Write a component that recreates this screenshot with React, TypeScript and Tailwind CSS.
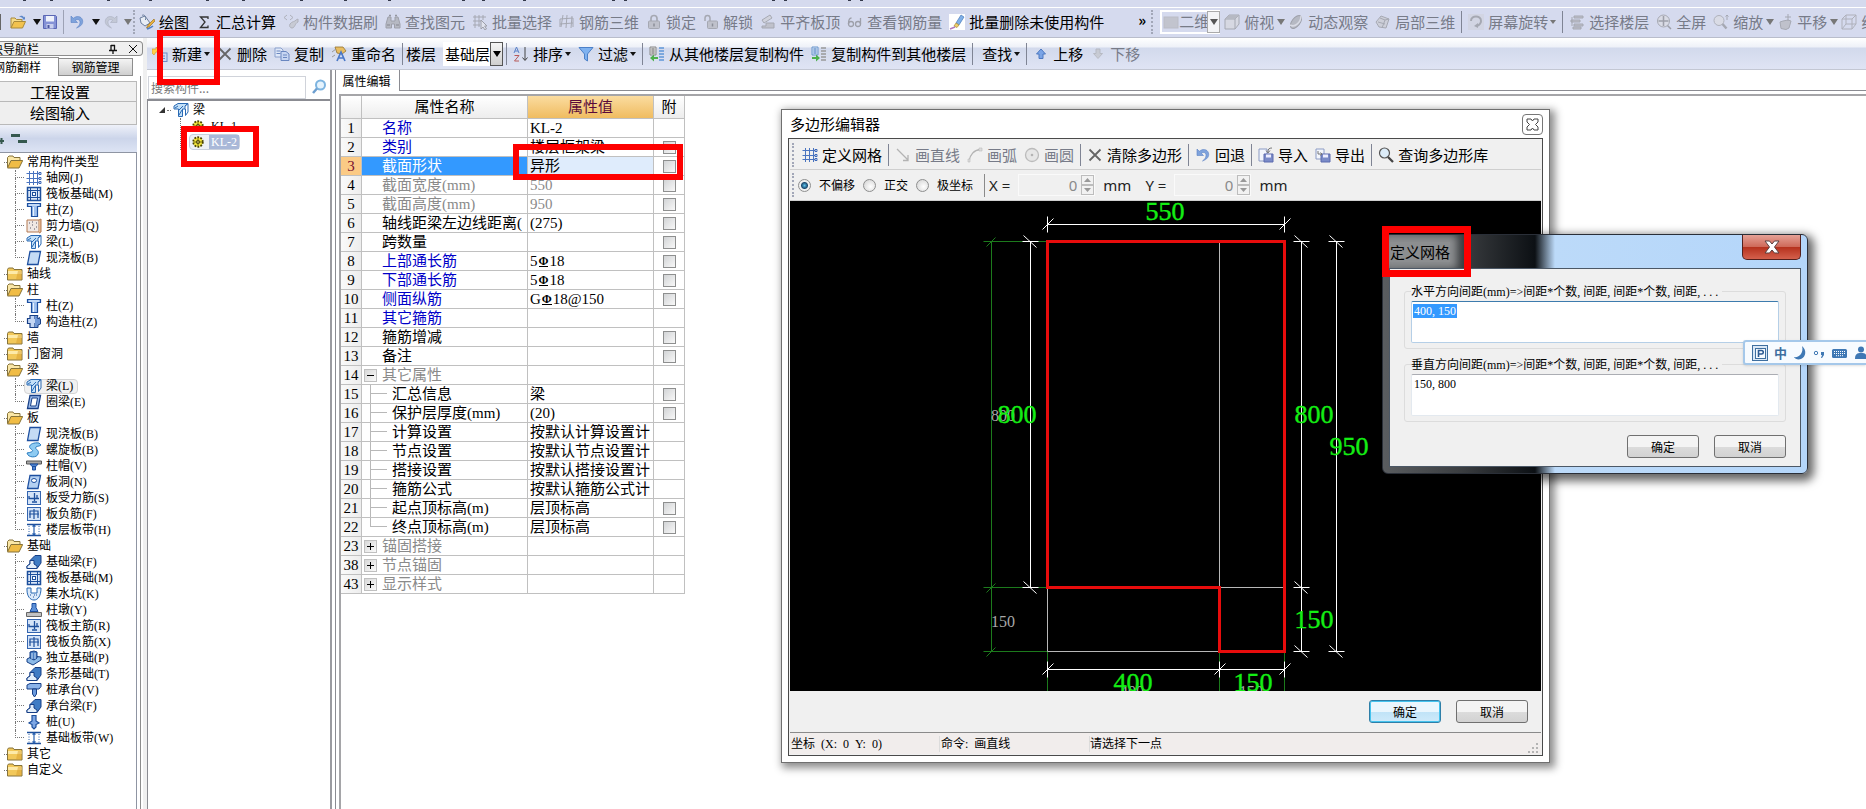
import React from "react";

type Kids = { children?: React.ReactNode };

function Svg({ children, dim }: Kids & { dim?: boolean }) {
  return (
    <svg viewBox="0 0 16 16" aria-hidden="true" className={dim ? "size-4 shrink-0 opacity-50 grayscale" : "size-4 shrink-0"}>
      {children}
    </svg>
  );
}

const art: Record<string, React.ReactNode> = {
  open: (
    <>
      <path d="M1 14V4h4l1.500 1.500H12V8" fill="#f6dc8a" stroke="#a98a3a" />
      <path d="M1 14l3-6.500h11.500L12.500 14z" fill="#f2c24e" stroke="#a98a3a" />
      <path d="M9 2.500c2-1.500 4-1 5 1l1-1v3h-3l1-1c-1-1.300-2.500-1.500-4-2z" fill="#5c86c8" />
    </>
  ),
  save: (
    <>
      <path d="M1.500 1.500h12l1 1v12h-13z" fill="#8592d6" stroke="#5a66b4" />
      <rect x="4" y="2" width="8" height="5.500" fill="#eef1fb" />
      <rect x="4.500" y="10" width="7" height="4.500" fill="#c9cfee" />
      <rect x="5.500" y="11" width="2" height="3" fill="#4a559f" />
    </>
  ),
  undo: (
    <path d="M2 2v6.500h6.500L6.300 6.300C9 4.500 11.500 6 11 9c-.3 2-1.800 3.800-3.500 5C12 12.500 14.500 9.500 13.500 6 12.300 2 7.500 1.500 4.300 4.300z" fill="#7fa3dc" stroke="#5b82c4" strokeWidth=".6" />
  ),
  redo: (
    <path d="M14 2v6.500H7.500l2.200-2.200C7 4.500 4.500 6 5 9c.3 2 1.800 3.800 3.500 5C4 12.500 1.500 9.500 2.500 6 3.700 2 8.500 1.500 11.700 4.300z" fill="#c3c8d6" stroke="#a9afc0" strokeWidth=".6" />
  ),
  draw: (
    <>
      <path d="M1 4l5-2 5 7-5 3-4-3z" fill="#e8edf5" stroke="#6c7f9e" />
      <path d="M3 1.500C5 0 7 2 6.500 6" fill="none" stroke="#6c7f9e" />
      <path d="M15 5l-6 6-1.500 3 3-1.500L16 7z" fill="#e9b13c" stroke="#9b7426" strokeWidth=".7" />
      <path d="M8 15c2-1 4-1 6-3" fill="none" stroke="#4f7fc4" strokeWidth="1.500" />
    </>
  ),
  sigma: <path d="M12 5V3H4.500L9 8l-4.500 5.500H12v-2" fill="none" stroke="#333" strokeWidth="1.300" />,
  brush: (
    <>
      <path d="M4 1L1 3.500 4 6M7 1l3 2.500L7 6" fill="none" stroke="#888" />
      <path d="M7 10c2-3 5-2 6-4l2-1v3c-3 1-3 6-6 6-2 0-3-2-2-4z" fill="#bbb" stroke="#888" />
    </>
  ),
  binocular: (
    <>
      <path d="M3 3h3v4h4V3h3l2 7v4H9.500v-4h-3v4H1v-4z" fill="#999" stroke="#666" />
      <path d="M4 1.500h2M10 1.500h2M2 11h3M11 11h3" stroke="#555" strokeWidth="1.300" />
    </>
  ),
  batch: (
    <>
      <path d="M1 3h13M1 7h8M1 11h7M3 1v13M7 1v12M11 1v5" stroke="#777" fill="none" />
      <path d="M9 6v9l2-2 2 3 1.500-1-1.800-3H15z" fill="#eee" stroke="#666" />
    </>
  ),
  rebar: <path d="M4 1L2 13M8 1L7 14M13 2l-1 12M1 5l13-1M1 10l13-1M1 5v8M14 4v9" stroke="#777" fill="none" />,
  lock: (
    <>
      <path d="M5 7V4.500c0-4 6-4 6 0V7" fill="none" stroke="#777" strokeWidth="1.700" />
      <rect x="2.500" y="7" width="11" height="7.500" rx="1" fill="#aaa" stroke="#777" />
      <path d="M8 9.500v3" stroke="#444" strokeWidth="1.500" />
    </>
  ),
  unlock: (
    <>
      <path d="M2 7V4c0-3.500 5-3.500 5 0v3" fill="none" stroke="#777" strokeWidth="1.500" />
      <rect x="4.500" y="7" width="10" height="7.500" rx="1" fill="#aaa" stroke="#777" />
      <path d="M9.500 9.500v3" stroke="#444" strokeWidth="1.500" />
    </>
  ),
  align: (
    <>
      <path d="M2 6l8-5 2 3-8 5z" fill="#ccc" stroke="#777" />
      <path d="M6 9h8v5H2v-2h4z" fill="#aaa" stroke="#777" />
    </>
  ),
  glasses: (
    <>
      <circle cx="4" cy="10" r="2.500" fill="none" stroke="#666" strokeWidth="1.300" />
      <circle cx="11" cy="10" r="2.500" fill="none" stroke="#666" strokeWidth="1.300" />
      <path d="M1.500 10c0-4 1-6 3-6M13.500 10V4" fill="none" stroke="#666" strokeWidth="1.300" />
    </>
  ),
  eraser: (
    <>
      <rect width="16" height="16" fill="#fff" />
      <path d="M12 1l3 2-5 8-3-2z" fill="#7fb0e8" stroke="#4a7ab8" strokeWidth=".7" />
      <path d="M7 9l3 2-2 2.500L5 12z" fill="#f0cf6a" stroke="#a88a3a" strokeWidth=".7" />
      <path d="M1 15l5-2" stroke="#b07ac0" strokeWidth="1.500" />
    </>
  ),
  flat: <rect x="1" y="3" width="14" height="11" fill="#aab0c6" stroke="#9aa0b6" />,
  cube: (
    <>
      <path d="M1 5l4-4h10v9l-4 5H1z" fill="#d5d8e0" stroke="#777" />
      <path d="M1 5h10v10M11 5l4-4" fill="none" stroke="#777" />
      <path d="M1 5l4-4h10l-4 4z" fill="#999" />
    </>
  ),
  orbit: (
    <>
      <ellipse cx="8" cy="8" rx="4" ry="7.500" transform="rotate(38 8 8)" fill="#999" stroke="#666" />
      <path d="M2 11C7 14 13 8 13 2" fill="none" stroke="#ddd" strokeWidth="1.500" />
    </>
  ),
  local: (
    <>
      <path d="M1 8l5-6 8 3-3 9-7-1z" fill="#c4c6cc" stroke="#777" />
      <path d="M5 4l5 2-3 8M10 6l4-1M3 8l7 2" fill="none" stroke="#777" />
    </>
  ),
  rotate: (
    <>
      <rect width="16" height="16" fill="#ccc" opacity=".6" />
      <path d="M3 7c0-6 10-6 10 0 0 3-2 4-4 5" fill="none" stroke="#777" strokeWidth="2" />
      <path d="M10 9v5l-4-2z" fill="#777" />
    </>
  ),
  floors: <path d="M5 2h9v2H5zM2 6h9v2H2zM5 10h9v2H5zM4 13h8v2H4zM3 3v9" fill="#aaa" stroke="#777" />,
  full: (
    <>
      <circle cx="7.500" cy="7" r="6" fill="#ddd" stroke="#777" />
      <path d="M7.500 2v10M2.500 7h10M11.500 11.500L15 15" stroke="#666" strokeWidth="1.500" />
    </>
  ),
  zoomy: (
    <>
      <circle cx="6" cy="6.500" r="5" fill="#ddd" stroke="#888" />
      <path d="M9.500 10l4 4.500" stroke="#777" strokeWidth="2.500" />
      <path d="M14 1v5M12.500 2.500L14 1l1.500 1.500" stroke="#777" fill="none" />
    </>
  ),
  hand: (
    <>
      <path d="M3 8l3-1 5-1 3 1-2 7-3 1.500-5-1z" fill="#aaa" stroke="#777" />
      <path d="M11 0v7M8 3h6" stroke="#777" />
    </>
  ),
  wire: (
    <path d="M1 5l4-4h10v9l-4 5H1zM1 5h10v10M11 5l4-4M5 1v9h10M5 10l-4 5" fill="none" stroke="#888" />
  ),
  add: (
    <>
      <path d="M0 3h4V1l2 2h3v3H4l-2 3-2-2z" fill="#ffd24a" stroke="#c9962a" strokeWidth=".6" />
      <rect x="6" y="7" width="9" height="8.500" fill="#cfdcf5" stroke="#6f8ac4" />
      <path d="M8 10h5M8 12.500h5" stroke="#6f8ac4" />
    </>
  ),
  cross: <path d="M2.500 2.500L13.500 13.500M13.500 2.500L2.500 13.500" stroke="#666" strokeWidth="1.800" fill="none" />,
  copy: (
    <>
      <path d="M1 2h6l2 2v7H1z" fill="#dfe8f8" stroke="#8aa0cc" />
      <path d="M7 5.500h5l3 2.500v6.500H7z" fill="#c7d6f2" stroke="#6a87c0" />
      <path d="M2.500 5h4M2.500 7.500h4M9 9h4M9 11.500h4" stroke="#6a87c0" />
    </>
  ),
  rename: (
    <>
      <path d="M4 1h8l3 4-4 3-5-1z" fill="#e8bd62" stroke="#96742e" strokeWidth=".8" />
      <path d="M1 6l4-3M1 11l3-2" stroke="#999" />
      <path d="M6 15l4-9 4 9M7.500 12h5" fill="none" stroke="#4a78c8" strokeWidth="1.700" />
    </>
  ),
  sort: (
    <>
      <path d="M1 7l2.500-6L6 7M2 5h3" fill="none" stroke="#5b82c8" />
      <path d="M1.500 9.500H6L1.500 15H6" fill="none" stroke="#b85a5a" />
      <path d="M12 1v13M9.500 11.500L12 14.500l2.500-3" fill="none" stroke="#444" />
    </>
  ),
  filter: <path d="M1 1.500h14L9.500 8v7L6.500 13V8z" fill="#7fb2f0" stroke="#4b80c8" />,
  fromFloor: (
    <>
      <path d="M1 1h6v8H1z" fill="#ddd" stroke="#888" />
      <path d="M2.500 3h3M2.500 5h3M2.500 7h3" stroke="#666" />
      <path d="M10 2h5M10 5h5M10 8h5M10 11h5M10 14h5" stroke="#5f96d8" strokeWidth="1.600" />
      <path d="M9 11H5V8.500L1 12l4 3.500V13h4z" fill="#4db04d" />
    </>
  ),
  toFloor: (
    <>
      <path d="M1 1h6v8H1z" fill="#cfe0f5" stroke="#6a96cc" />
      <path d="M2.500 3h3M2.500 5h3M2.500 7h3" stroke="#4477bb" />
      <path d="M10 2h5M10 5h5M10 8h5M10 11h5M10 14h5" stroke="#999" strokeWidth="1.600" />
      <path d="M1 11h4V8.500L9 12l-4 3.500V13H1z" fill="#4db04d" />
    </>
  ),
  up: <path d="M8 3l4.500 5H10v4.500H6V8H3.500z" fill="#7aa4e6" stroke="#4d78c0" />,
  down: <path d="M8 12.500L3.500 7.500H6V3h4v4.500h2.500z" fill="#bbb" stroke="#999" />,
  line: <path d="M2 2l11 11M13 8v5.500H8" fill="none" stroke="#777" strokeWidth="1.300" />,
  arc: (
    <>
      <path d="M2 14C3 8 7 3 13 2.500" fill="none" stroke="#777" strokeWidth="1.300" />
      <path d="M12 1h3v3h-3zM1 12h2v3H1z" fill="#ccc" stroke="#888" strokeWidth=".6" />
    </>
  ),
  circle: (
    <>
      <circle cx="8" cy="8" r="6.500" fill="#ddd" stroke="#888" strokeWidth="1.300" />
      <circle cx="8" cy="8" r="1.300" fill="#777" />
    </>
  ),
  importing: (
    <>
      <path d="M1 2h8v12H1z" fill="#f3f6fc" stroke="#8c9bc4" />
      <path d="M6 7h9v8H6z" fill="#7b8bc8" stroke="#5c6bae" />
      <path d="M8 7.500h5v3H8z" fill="#eef" />
      <path d="M14 1c-3 0-4 1-4 4M8 3.500L10 6l2-2.500" fill="none" stroke="#777" />
    </>
  ),
  exporting: (
    <>
      <path d="M1 2h8v10H1z" fill="#f3f6fc" stroke="#8c9bc4" />
      <path d="M6 7h9v8H6z" fill="#7b8bc8" stroke="#5c6bae" />
      <path d="M8 7.500h5v3H8z" fill="#eef" />
      <path d="M3 4v3h4M5.500 5.500L7 7 5.500 8.500" fill="none" stroke="#777" />
    </>
  ),
  search: (
    <>
      <circle cx="6.500" cy="6" r="5" fill="#dcecf8" stroke="#555" strokeWidth="1.200" />
      <path d="M10 10l5 5" stroke="#444" strokeWidth="2.300" />
    </>
  ),
  find: (
    <>
      <circle cx="9.500" cy="6" r="4.500" fill="#e5f3fd" stroke="#7db4e0" strokeWidth="2" />
      <path d="M6 9.500L2 14" stroke="#6d9fd0" strokeWidth="2.500" />
    </>
  ),
  grid: (
    <>
      <path d="M.5 3.500h13M.5 8.500h13M.5 12.500h13M3.500 1v14M7.500 1v14M11.500 1v14" stroke="#4a74c0" fill="none" />
      <path d="M13 2.500h2v2h-2zM13 7.500h2v2h-2zM13 11.500h2v2h-2z" stroke="#3b67b8" fill="#fff" />
    </>
  ),
  folder: (
    <>
      <path d="M.5 3.500l1-1.500H6l1 1.500h8V14H.5z" fill="#f2c85a" stroke="#86733a" />
      <path d="M1 5h13.500v3H1z" fill="#fdeaa9" />
      <path d="M11 5h3.500v8.500H9z" fill="#d79d2c" opacity=".5" />
    </>
  ),
  folderOpen: (
    <>
      <path d="M.5 13V3.500L2 2h4l1 1.500h6V6" fill="#fbe7a6" stroke="#86733a" />
      <path d="M.5 14L4 6.500h11.700L12 14z" fill="#f0bc45" stroke="#86733a" />
    </>
  ),
  raft: (
    <>
      <rect x="1.500" y="1.500" width="13" height="13" fill="#dce8f8" stroke="#1d4f9c" strokeWidth="1.500" />
      <path d="M1 4.500h14M1 11.500h14M4.500 1v14M11.500 1v14" stroke="#1d4f9c" />
      <rect x="6.500" y="6.500" width="3" height="3" fill="#fff" stroke="#1d4f9c" />
    </>
  ),
  column: (
    <>
      <path d="M1.500 1.500h13v3h-3v10h-6v-10h-4z" fill="#9fc0ee" stroke="#1d4fa0" strokeWidth="1.200" />
      <path d="M3 3h10M7.500 5v9" stroke="#e8f2fd" />
    </>
  ),
  wall: (
    <>
      <path d="M1 2h12v12H1z" fill="#f0e8e4" stroke="#b57a52" />
      <path d="M13 2l2-1v13l-2 1" fill="#e6b890" stroke="#b57a52" />
      <path d="M3 5h1M6 7h1M10 5h1M4 10h1M8 11h1M10 9h1M6 4h1" stroke="#556" />
    </>
  ),
  beam: (
    <>
      <path d="M1 4l4-2.500h10L12 4v3H9.500v7.500h-4V7H1z" fill="#c3e0f8" stroke="#2a6ab4" />
      <path d="M12 4l3-2.500V10l-2.500 3.500V7M2 6l3-2M6 13l3-5M6 8l4-4" fill="none" stroke="#2a6ab4" />
    </>
  ),
  slab: <path d="M4 1.500h10.500L12 14.500H1.500z" fill="#c4dbf5" stroke="#1d4fa0" strokeWidth="1.300" />,
  ring: (
    <>
      <path d="M4 1.500h10.500L12 14.500H1.500z" fill="#9cbcec" stroke="#173f86" strokeWidth="1.300" />
      <path d="M6 4h5.500L10 12H4.500z" fill="#fff" stroke="#173f86" />
    </>
  ),
  hole: (
    <>
      <path d="M4 1.500h10.500L12 14.500H1.500z" fill="#b4d0f2" stroke="#1d4fa0" strokeWidth="1.300" />
      <ellipse cx="8" cy="6.500" rx="2.500" ry="2" fill="#fff" stroke="#1d4fa0" />
    </>
  ),
  tie: (
    <>
      <path d="M4 1.500h5v3h3v5H9v4H4v-4H1.500v-5H4z" fill="#c3d6f4" stroke="#173f86" strokeWidth="1.200" />
      <path d="M9 1.500h3l-1 2.500 3.500 1v5L12 11v2.500H9M12 4.500l2-1" fill="#6f97d6" stroke="#173f86" />
    </>
  ),
  spiral: (
    <path d="M13 1C6 0 1 4 5 7c3 2 2 3-4 4 1 5 10 5 11 1C14 8 8 7 10 5c1-1 5-1 5-2z" fill="#8ecbf2" stroke="#2a7cc0" />
  ),
  cap: (
    <>
      <path d="M.5 3h15v3H.5z" fill="#a8a8a8" stroke="#555" />
      <path d="M4 6h8l-2 2.500H6zM6.500 8.500h3V12h-3z" fill="#4f84d0" stroke="#1d4fa0" />
    </>
  ),
  bars: (
    <>
      <rect x="1.500" y="1.500" width="13" height="13" fill="#d5e4f8" stroke="#3465b0" />
      <path d="M8.500 3v8M3 6v2.500h10M11 5v3M6 12h5" fill="none" stroke="#1d4f9c" strokeWidth="1.300" />
    </>
  ),
  negbars: (
    <>
      <rect x="1.500" y="1.500" width="13" height="13" fill="#d5e4f8" stroke="#3465b0" />
      <path d="M4 12V5h8v7M3 8h10M8 3v10" fill="none" stroke="#1d4f9c" strokeWidth="1.200" />
    </>
  ),
  strip: (
    <>
      <path d="M1 2.500h14M1 13.500h14" stroke="#1d4f9c" strokeWidth="1.500" />
      <path d="M8 3v10M6.500 4.500L8 3l1.500 1.500M6.500 11.500L8 13l1.500-1.500" stroke="#2a62b0" fill="none" strokeWidth="1.200" />
      <path d="M3 4v9M13 4v9" stroke="#2a62b0" strokeDasharray="1 1.500" />
    </>
  ),
  footing: (
    <>
      <path d="M1 14.500V12l3-2V6.500L9 1.500h6V9l-4 5.500z" fill="#3f7cc4" stroke="#173f86" />
      <path d="M1 14.500V12l3-2V6.500h4V10l3 2v2.500z" fill="#e3effb" stroke="#173f86" />
    </>
  ),
  pit: (
    <>
      <path d="M1 2h4v5h6V2h4c0 8-3 12-7 12S1 10 1 4z" fill="#dceafa" stroke="#2a6ab4" />
      <path d="M4 9h1M7 11h1M10 9h1M8 9h1" stroke="#1d4f9c" />
    </>
  ),
  pier: (
    <>
      <path d="M6 1.500h4v4l2 4H4l2-4z" fill="#5c90d8" stroke="#1d4fa0" />
      <path d="M.5 10.500h15v4H.5z" fill="#c2c2c2" stroke="#666" />
    </>
  ),
  iso: (
    <>
      <path d="M1 9l6-3 8 1v3l-8 5-6-3z" fill="#8cbae8" stroke="#173f86" />
      <path d="M4 2l4-1 3 1v6l-3 2-4-2z" fill="#4a80c4" stroke="#173f86" />
      <path d="M6 3v6M9 3v6" stroke="#cfe2f8" />
    </>
  ),
  pilecap: (
    <>
      <path d="M1 3l3-1.500h11v3L13 7H1z" fill="#8cb4ea" stroke="#173f86" />
      <path d="M6.500 7h4v5l-2 3-2-3z" fill="#6a9ade" stroke="#173f86" />
    </>
  ),
  pile: <path d="M6 1.500h4V7l3 2-3 1.500V13l-2 2-2-2v-2.500L3 9l3-2z" fill="#7da6e4" stroke="#1d4f9c" strokeWidth="1.200" />,
  gear: (
    <>
      <circle cx="8" cy="8" r="5.500" fill="#f4e83a" stroke="#4a4400" strokeWidth="2" strokeDasharray="2 1.500" />
      <circle cx="8" cy="8" r="2" fill="#fff8a0" stroke="#4a4400" />
      <path d="M8 3v10M3 8h10" stroke="#4a4400" strokeWidth=".8" />
    </>
  ),
};

function Icon({ name, dim }: { name: string; dim?: boolean }) {
  return <Svg dim={dim}>{art[name]}</Svg>;
}

function Caret({ dim, small }: { dim?: boolean; small?: boolean }) {
  const fill = dim ? "#777" : "#111";
  return small ? (
    <svg viewBox="0 0 6 4" aria-hidden="true" className="ml-0.5 h-1 w-1.5 shrink-0">
      <path d="M0 0h6L3 4z" fill={fill} />
    </svg>
  ) : (
    <svg viewBox="0 0 8 6" aria-hidden="true" className="-mr-1 ml-[3px] h-1.5 w-2 shrink-0">
      <path d="M0 0h8L4 6z" fill={fill} />
    </svg>
  );
}

type ToolProps = { icon?: string; label: string; dim?: boolean; caret?: "big" | "small" };

function Tool({ icon, label, dim, caret }: ToolProps) {
  return (
    <button
      type="button"
      disabled={dim}
      className={
        "flex shrink-0 items-center px-[3px] text-[15px] leading-5 whitespace-nowrap " + (dim ? "text-[#777b88]" : "text-black")
      }
    >
      {icon && <Icon name={icon} dim={dim} />}
      <span className={icon ? "ml-1" : ""}>{label}</span>
      {caret && <Caret dim={dim} small={caret === "small"} />}
    </button>
  );
}

const Sep = () => <span className="mx-0.5 h-[22px] w-px shrink-0 bg-[#7f8494]" />;
const Grip = () => <span className="h-6 w-0 shrink-0 border-l-2 border-dotted border-[#a2a7b8]" />;

function MainToolbar() {
  return (
    <header className="shrink-0 bg-[#d5daee]">
      <svg className="block h-[7px] w-full" aria-hidden="true">
        {[23, 50, 107, 149, 206, 242, 300, 344, 388, 462, 482, 523, 612, 624, 772, 784, 848, 860].map((x) => (
          <rect key={x} x={x} y="0" width="3" height="1" fill="#33384a" />
        ))}
      </svg>
      <div className="flex h-[31px] items-center gap-px overflow-hidden border-t border-b border-t-white border-b-[#b9bdcb] bg-[#d5daee] pb-0.5">
        <span className="h-4 w-px shrink-0 bg-[#666]" />
        <button type="button" aria-label="打开" className="ml-2 flex shrink-0 items-center">
          <Icon name="open" />
          <span className="ml-1">
            <Caret />
          </span>
        </button>
        <button type="button" aria-label="保存" className="ml-1 shrink-0">
          <Icon name="save" />
        </button>
        <span className="mx-1 h-6 w-px shrink-0 bg-[#9da2b5]" />
        <button type="button" aria-label="撤销" className="flex shrink-0 items-center">
          <Icon name="undo" />
          <span className="ml-1">
            <Caret />
          </span>
        </button>
        <button type="button" aria-label="恢复" className="ml-1.5 flex shrink-0 items-center">
          <Icon name="redo" />
          <span className="ml-0.5">
            <Caret dim />
          </span>
        </button>
        <span className="w-[3px] shrink-0" />
        <Grip />
        <Tool icon="draw" label="绘图" />
        <Tool icon="sigma" label="汇总计算" />
        <Tool icon="brush" label="构件数据刷" dim />
        <Tool icon="binocular" label="查找图元" dim />
        <Tool icon="batch" label="批量选择" dim />
        <Tool icon="rebar" label="钢筋三维" dim />
        <Tool icon="lock" label="锁定" dim />
        <Tool icon="unlock" label="解锁" dim />
        <Tool icon="align" label="平齐板顶" dim />
        <Tool icon="glasses" label="查看钢筋量" dim />
        <Tool icon="eraser" label="批量删除未使用构件" />
        <button type="button" aria-label="更多" className="ml-[26px] w-4 shrink-0 self-start text-[15px] leading-6 font-bold">
          »
        </button>
        <Grip />
        <label className="ml-1.5 flex h-6 shrink-0 items-center border-2 border-r-0 border-white pl-px text-[15px] text-[#777b88]">
          <Icon name="flat" dim />
          <select aria-label="视图" disabled className="w-7 shrink-0 appearance-none overflow-hidden bg-transparent opacity-100">
            <option>二维</option>
          </select>
          <span className="flex h-[22px] w-[13px] shrink-0 items-center justify-center border border-[#aaa] bg-[#f3f4f6]">
            <svg viewBox="0 0 8 6" className="h-1.5 w-2">
              <path d="M0 0h8L4 6z" fill="#555" />
            </svg>
          </span>
        </label>
        <Tool icon="cube" label="俯视" dim caret="big" />
        <Tool icon="orbit" label="动态观察" dim />
        <Tool icon="local" label="局部三维" dim />
        <Sep />
        <Tool icon="rotate" label="屏幕旋转" dim caret="small" />
        <Sep />
        <Tool icon="floors" label="选择楼层" dim />
        <Tool icon="full" label="全屏" dim />
        <Tool icon="zoomy" label="缩放" dim caret="big" />
        <Tool icon="hand" label="平移" dim caret="big" />
        <Tool icon="wire" label="线框" dim />
      </div>
    </header>
  );
}

function ComponentToolbar() {
  return (
    <div className="flex h-8 shrink-0 items-center gap-px overflow-hidden border-b border-[#c3c7d3] bg-[linear-gradient(#ffffff_0,#eef1f8_9px,#d2d9ec_10px,#dfe4f4_31px)] pl-0.5">
      <Tool icon="add" label="新建" caret="small" />
      <Tool icon="cross" label="删除" />
      <Tool icon="copy" label="复制" />
      <Tool icon="rename" label="重命名" />
      <Sep />
      <label className="flex shrink-0 items-center text-[15px] leading-5">
        楼层
        <span className="ml-[7px] flex h-6 bg-white pl-0.5">
          <select aria-label="楼层" className="w-[45px] appearance-none overflow-hidden">
            <option>基础层</option>
          </select>
          <span className="flex w-[13px] items-center justify-center border border-[#555] bg-[linear-gradient(#f5f5f5,#cfcfcf)]">
            <svg viewBox="0 0 8 6" className="h-1.5 w-2">
              <path d="M0 0h8L4 6z" fill="#000" />
            </svg>
          </span>
        </span>
      </label>
      <Sep />
      <Tool icon="sort" label="排序" caret="small" />
      <Tool icon="filter" label="过滤" caret="small" />
      <Sep />
      <Tool icon="fromFloor" label="从其他楼层复制构件" />
      <Tool icon="toFloor" label="复制构件到其他楼层" />
      <Sep />
      <span className="ml-[3px] flex">
        <Tool label="查找" caret="small" />
      </span>
      <Sep />
      <Tool icon="up" label="上移" />
      <Tool icon="down" label="下移" dim />
    </div>
  );
}

type NavGroup = { name: string; items?: [string, string][] };

const navGroups: NavGroup[] = [
  {
    name: "常用构件类型",
    items: [
      ["grid", "轴网(J)"],
      ["raft", "筏板基础(M)"],
      ["column", "柱(Z)"],
      ["wall", "剪力墙(Q)"],
      ["beam", "梁(L)"],
      ["slab", "现浇板(B)"],
    ],
  },
  { name: "轴线" },
  {
    name: "柱",
    items: [
      ["column", "柱(Z)"],
      ["tie", "构造柱(Z)"],
    ],
  },
  { name: "墙" },
  { name: "门窗洞" },
  {
    name: "梁",
    items: [
      ["beam", "梁(L)"],
      ["ring", "圈梁(E)"],
    ],
  },
  {
    name: "板",
    items: [
      ["slab", "现浇板(B)"],
      ["spiral", "螺旋板(B)"],
      ["cap", "柱帽(V)"],
      ["hole", "板洞(N)"],
      ["bars", "板受力筋(S)"],
      ["negbars", "板负筋(F)"],
      ["strip", "楼层板带(H)"],
    ],
  },
  {
    name: "基础",
    items: [
      ["footing", "基础梁(F)"],
      ["raft", "筏板基础(M)"],
      ["pit", "集水坑(K)"],
      ["pier", "柱墩(Y)"],
      ["bars", "筏板主筋(R)"],
      ["negbars", "筏板负筋(X)"],
      ["iso", "独立基础(P)"],
      ["footing", "条形基础(T)"],
      ["pilecap", "桩承台(V)"],
      ["footing", "承台梁(F)"],
      ["pile", "桩(U)"],
      ["strip", "基础板带(W)"],
    ],
  },
  { name: "其它" },
  { name: "自定义" },
];

function NavPane() {
  return (
    <aside className="flex w-[143px] shrink-0 flex-col overflow-hidden pt-[3px]">
      <div className="flex h-[15px] shrink-0 items-center rounded-r-sm border border-l-0 border-[#8d8d8d] bg-[#efefef] text-xs leading-[13px]">
        <span className="-ml-[9px] grow whitespace-nowrap">块导航栏</span>
        <button type="button" aria-label="固定" className="mr-2.5">
          <svg viewBox="0 0 10 10" className="size-2.5">
            <path d="M3 1v5M3 1.500h4M6.500 1v5M1 6.500h8M5 7v3" stroke="#111" fill="none" strokeWidth="1.300" />
          </svg>
        </button>
        <button type="button" aria-label="关闭" className="mr-1">
          <svg viewBox="0 0 10 10" className="size-2.5">
            <path d="M1 1l8 8M9 1l-8 8" stroke="#111" fill="none" />
          </svg>
        </button>
      </div>
      <div role="tablist" className="flex h-5 shrink-0 items-end text-xs leading-4 whitespace-nowrap">
        <button role="tab" aria-selected="true" type="button" className="h-[19px] w-[59px] border-t border-r border-[#8d8d8d] bg-white">
          <span className="-ml-[7px] block w-12">钢筋翻样</span>
        </button>
        <button role="tab" aria-selected="false" type="button" className="h-[18px] w-[74px] border border-l-0 border-[#8d8d8d] bg-[linear-gradient(#f4f4f4,#cfcfcf)]">
          钢筋管理
        </button>
      </div>
      <div className="mr-0.5 flex min-h-0 grow flex-col border-r border-[#8d8d8d] pt-[5px] pr-[3px]">
        <button type="button" className="h-[21px] w-full shrink-0 border-y border-r border-[#b9b9b9] bg-[#efefef] pr-4 text-center text-[15px] leading-4">
          工程设置
        </button>
        <button type="button" className="h-[23px] w-full shrink-0 border-r border-b border-[#b9b9b9] bg-[#efefef] pr-4 text-center text-[15px] leading-5">
          绘图输入
        </button>
        <div className="flex h-7 shrink-0 items-center gap-1.5 border-b border-[#8f95a3] bg-[linear-gradient(#eef1f9,#ccd5ea_50%,#dde4f4)]">
          <svg viewBox="0 0 28 14" className="h-3.5 w-7" aria-hidden="true">
            <path d="M0 9h4M1.500 6v6" stroke="#35584e" strokeWidth="2" />
            <path d="M11 3.500h9M18 9.500h9" stroke="#35584e" strokeWidth="3" />
          </svg>
        </div>
        <ul className="grow overflow-hidden border-r border-[#8f95a3] bg-white pt-px font-['Liberation_Serif','Noto_Sans_CJK_SC',serif] text-xs leading-4 whitespace-nowrap">
          {navGroups.map((g, gi) => (
            <li key={g.name}>
              <div className="flex h-4 items-center pl-1">
                <span className="w-[3px] border-t border-dotted border-[#777]" />
                <Icon name={g.items ? "folderOpen" : "folder"} />
                <span className="ml-1">{g.name}</span>
              </div>
              {g.items && (
                <ul>
                  {g.items.map(([icon, label], i) => (
                    <li key={label} className="flex h-4 items-center pl-[15px]">
                      <span className="flex h-4 w-[9px] flex-col">
                        <span className="h-2 border-b border-l border-dotted border-[#777]" />
                        {i < g.items!.length - 1 && <span className="h-2 border-l border-dotted border-[#777]" />}
                      </span>
                      <button
                        type="button"
                        className={
                          "flex h-[15px] items-center rounded-sm border pr-1 pl-px " +
                          (gi === 5 && i === 0 ? "border-[#d4d4d4] bg-[#f1f1f1]" : "border-transparent")
                        }
                      >
                        <Icon name={icon} />
                        <span className="ml-1">{label}</span>
                      </button>
                    </li>
                  ))}
                </ul>
              )}
            </li>
          ))}
        </ul>
      </div>
    </aside>
  );
}

function ComponentTree() {
  return (
    <section className="flex w-[185px] shrink-0 flex-col border-r-2 border-[#9a9ba0] bg-[#f0f0f0]">
      <div className="flex h-[29px] shrink-0 items-end bg-white pl-px">
        <input
          aria-label="搜索构件"
          placeholder="搜索构件..."
          className="h-[23px] w-[158px] border border-[#d0d3da] bg-white pl-0.5 text-xs placeholder:text-[#777]"
        />
        <button type="button" aria-label="搜索" className="mb-1 ml-[5px]">
          <Icon name="find" />
        </button>
      </div>
      <ul className="grow border-t-2 border-l border-[#8b8c92] bg-white pt-px font-['Liberation_Serif','Noto_Sans_CJK_SC',serif] text-xs leading-4">
        <li>
          <div className="flex h-4 items-center pl-[11px]">
            <svg viewBox="0 0 6 6" className="size-1.5">
              <path d="M6 0v6H0z" fill="#333" />
            </svg>
            <span className="mx-0.5 w-1 border-t border-dotted border-[#777]" />
            <Icon name="beam" />
            <span className="ml-1">梁</span>
          </div>
          <ul className="ml-8 border-l border-dotted border-[#777]">
            {["KL-1", "KL-2"].map((k) => (
              <li key={k} className="flex h-4 items-center pl-2">
                <button
                  type="button"
                  className={
                    "flex h-4 items-center rounded-sm border pl-px " +
                    (k === "KL-2" ? "border-[#c9d0dc] bg-[#eef1f6]" : "border-transparent")
                  }
                >
                  <svg viewBox="0 0 16 16" className="size-3.5">
                    {art.gear}
                  </svg>
                  <span className={"ml-1 px-0.5 leading-[14px] " + (k === "KL-2" ? "bg-[#a9b8d8] text-white" : "")}>{k}</span>
                </button>
              </li>
            ))}
          </ul>
        </li>
      </ul>
    </section>
  );
}

type Row = { n: number; name: string; value?: string; tone?: "blue" | "gray"; check?: boolean; kind?: "open" | "closed" | "child" | "last" };

const rows: Row[] = [
  { n: 1, name: "名称", value: "KL-2", tone: "blue" },
  { n: 2, name: "类别", value: "楼层框架梁", tone: "blue", check: true },
  { n: 3, name: "截面形状", value: "异形", check: true },
  { n: 4, name: "截面宽度(mm)", value: "550", tone: "gray", check: true },
  { n: 5, name: "截面高度(mm)", value: "950", tone: "gray", check: true },
  { n: 6, name: "轴线距梁左边线距离(", value: "(275)", check: true },
  { n: 7, name: "跨数量", check: true },
  { n: 8, name: "上部通长筋", value: "5Φ18", tone: "blue", check: true },
  { n: 9, name: "下部通长筋", value: "5Φ18", tone: "blue", check: true },
  { n: 10, name: "侧面纵筋", value: "GΦ18@150", tone: "blue", check: true },
  { n: 11, name: "其它箍筋", tone: "blue" },
  { n: 12, name: "箍筋增减", check: true },
  { n: 13, name: "备注", check: true },
  { n: 14, name: "其它属性", tone: "gray", kind: "open" },
  { n: 15, name: "汇总信息", value: "梁", check: true, kind: "child" },
  { n: 16, name: "保护层厚度(mm)", value: "(20)", check: true, kind: "child" },
  { n: 17, name: "计算设置", value: "按默认计算设置计", kind: "child" },
  { n: 18, name: "节点设置", value: "按默认节点设置计", kind: "child" },
  { n: 19, name: "搭接设置", value: "按默认搭接设置计", kind: "child" },
  { n: 20, name: "箍筋公式", value: "按默认箍筋公式计", kind: "child" },
  { n: 21, name: "起点顶标高(m)", value: "层顶标高", check: true, kind: "child" },
  { n: 22, name: "终点顶标高(m)", value: "层顶标高", check: true, kind: "last" },
  { n: 23, name: "锚固搭接", tone: "gray", kind: "closed" },
  { n: 38, name: "节点锚固", tone: "gray", kind: "closed" },
  { n: 43, name: "显示样式", tone: "gray", kind: "closed" },
];

function Value({ text }: { text: string }) {
  const [a, b] = text.split("Φ");
  if (b === undefined) return <>{text}</>;
  return (
    <span className="flex h-[18px] items-center">
      {a}
      <span className="mx-px h-[11px] border-b border-black text-xs leading-[11px] font-bold">Φ</span>
      {b}
    </span>
  );
}

function NameCell({ row }: { row: Row }) {
  const color = row.n === 3 ? "text-white" : row.tone === "blue" ? "text-[#0000c8]" : row.tone === "gray" ? "text-[#8a8a8a]" : "text-black";
  const child = row.kind === "child" || row.kind === "last";
  return (
    <div className={"flex h-[18px] items-center " + color}>
      {child ? (
        <span className="mr-[5px] ml-2 flex h-[18px] w-[17px] flex-col">
          <span className="h-[9px] border-b border-l border-[#b8b8b8]" />
          {row.kind === "child" && <span className="h-[9px] border-l border-[#b8b8b8]" />}
        </span>
      ) : (
        <span className="flex w-5 items-center pl-0.5">
          {row.kind && (
            <button
              type="button"
              aria-label={row.kind === "open" ? "折叠" : "展开"}
              className="flex size-[13px] items-center justify-center border border-[#c0c0c0] bg-[linear-gradient(135deg,#d8d8d8,#fafafa)]"
            >
              <svg viewBox="0 0 7 7" className="size-[7px]">
                <path d={row.kind === "open" ? "M0 3.500h7" : "M0 3.500h7M3.500 0v7"} stroke="#000" />
              </svg>
            </button>
          )}
        </span>
      )}
      {row.name}
    </div>
  );
}

function PropertyTable() {
  const cell = "border-r border-b border-[#c0c0c0] p-0 ";
  return (
    <table className="w-[344px] table-fixed border-separate border-spacing-0 font-['Liberation_Serif','Noto_Sans_CJK_SC',serif] text-[15px] leading-[18px] whitespace-nowrap">
      <colgroup>
        <col className="w-[21px]" />
        <col className="w-[166px]" />
        <col className="w-[126px]" />
        <col className="w-[31px]" />
      </colgroup>
      <thead>
        <tr className="h-[23px] bg-[linear-gradient(#ffffff,#ececec)]">
          <th className={cell} aria-label="序号" />
          <th className={cell + "font-normal"}>属性名称</th>
          <th className={cell + "bg-[linear-gradient(#fbdca0,#f0bc60)] font-normal text-[#5a0a3a]"}>属性值</th>
          <th className={cell + "font-normal"}>附</th>
        </tr>
      </thead>
      <tbody>
        {rows.map((r) => (
          <tr key={r.n} className="h-[19px]">
            <td className={cell + "text-center " + (r.n === 3 ? "bg-[#fbca85] text-[#7a1030]" : "bg-[linear-gradient(90deg,#fafafa,#ededed)]")}>{r.n}</td>
            <td className={cell + "overflow-hidden " + (r.n === 3 ? "bg-[#3399ff]" : "")}>
              <NameCell row={r} />
            </td>
            <td className={cell + "overflow-hidden pl-0.5 " + (r.n === 3 ? "bg-[#dfecfc] " : "") + (r.tone === "gray" ? "text-[#8a8a8a]" : "")}>
              {r.value && <Value text={r.value} />}
            </td>
            <td className={cell}>
              {r.check && (
                <input
                  type="checkbox"
                  aria-label={"附加 " + r.name}
                  className="mx-auto block size-[13px] appearance-none border border-[#8e8f8f] bg-[linear-gradient(135deg,#d2d4d6,#f8f8f8)]"
                />
              )}
            </td>
          </tr>
        ))}
      </tbody>
    </table>
  );
}

function PropertyPane() {
  return (
    <section className="ml-[3px] flex min-w-0 grow flex-col border-l border-[#8b8c92] bg-white">
      <div role="tablist" className="flex h-[21px] shrink-0">
        <button role="tab" aria-selected="true" type="button" className="w-16 border-r border-[#8b8c92] pr-0.5 text-xs leading-5">
          属性编辑
        </button>
        <span className="grow border-b border-[#8b8c92]" />
      </div>
      <div className="mt-[3px] ml-[3px] grow border-t-2 border-l-2 border-[#a5a5a8]">
        <PropertyTable />
      </div>
    </section>
  );
}

function DimTick({ x, y, dir, color = "#fff" }: { x: number; y: number; dir: "h" | "v" | "g"; color?: string }) {
  const d =
    dir === "h"
      ? `M${x} ${y - 8}v16M${x - 5} ${y + 5}l11 -11`
      : dir === "v"
        ? `M${x - 8} ${y}h16M${x - 7} ${y - 6}l13 12`
        : `M${x - 8} ${y}h16M${x - 5} ${y + 5}l9 -9`;
  return <path d={d} stroke={color} fill="none" />;
}

function PolygonCanvas() {
  return (
    <svg viewBox="0 0 751 490" className="block h-[490px] w-full bg-black" role="img" aria-label="截面多边形">
      <path d="M201.500 40v411M201.500 40.500H258M201.500 386.500H258M201.500 450.500H258M257.500 450v40M429.500 450v40M494.500 450v40" stroke="#1c7a1c" fill="none" />
      <DimTick x={201.5} y={40.5} dir="g" color="#1c7a1c" />
      <DimTick x={201.5} y={386.5} dir="g" color="#1c7a1c" />
      <DimTick x={201.5} y={450.5} dir="g" color="#1c7a1c" />
      <path d="M257.500 386v64.500H430M429.500 40v346.500h65" stroke="#b8b8b8" fill="none" />
      <path d="M258 23.500h236M240.500 40v346M511.500 40v411M546.500 40v411M258 468.500h236" stroke="#fff" fill="none" />
      <DimTick x={257.5} y={23.5} dir="h" />
      <DimTick x={494.5} y={23.5} dir="h" />
      <DimTick x={257.5} y={468.5} dir="h" />
      <DimTick x={429.5} y={468.5} dir="h" />
      <DimTick x={494.5} y={468.5} dir="h" />
      <DimTick x={240.5} y={40.5} dir="v" />
      <DimTick x={240.5} y={386.5} dir="v" />
      <DimTick x={511.5} y={40.5} dir="v" />
      <DimTick x={511.5} y={386.5} dir="v" />
      <DimTick x={511.5} y={450.5} dir="v" />
      <DimTick x={546.5} y={40.5} dir="v" />
      <DimTick x={546.5} y={450.5} dir="v" />
      <path d="M257.500 40.500h237v410h-65v-64h-172z" stroke="#e80c0c" strokeWidth="3" fill="none" />
      <g fill="#a8a8a8" className="font-['Liberation_Serif',serif] text-[16px]">
        <text x="201" y="220">800</text>
        <text x="201" y="426">150</text>
        <text x="330" y="496">400</text>
        <text x="449" y="496">150</text>
      </g>
      <g fill="#14ee14" stroke="#14ee14" strokeWidth=".4" textAnchor="middle" className="font-['Liberation_Serif',serif] text-[26px]">
        <text x="375" y="19">550</text>
        <text x="227" y="222">800</text>
        <text x="524" y="222">800</text>
        <text x="559" y="254">950</text>
        <text x="524" y="427">150</text>
        <text x="343" y="490">400</text>
        <text x="463" y="490">150</text>
      </g>
    </svg>
  );
}

function OffsetField({ name }: { name: string }) {
  return (
    <label className="flex items-center">
      {name} =
      <span className="mr-2 ml-2 flex h-[22px] border border-[#fafafa]">
        <input type="text" disabled defaultValue="0" className="w-[62px] bg-[#f0f0f0] pr-1 text-right text-[#8a8a8a]" />
        <span className="flex w-[13px] flex-col">
          {["M0 4h7L3.500 0z", "M0 0h7L3.500 4z"].map((d) => (
            <span key={d} className="flex flex-1 items-center justify-center border border-[#bdbdbd] bg-[#f2f2f2]">
              <svg viewBox="0 0 7 4" className="h-1 w-[7px]">
                <path d={d} fill="#999" />
              </svg>
            </span>
          ))}
        </span>
      </span>
      mm
    </label>
  );
}

function WinButton({ label, primary }: { label: string; primary?: boolean }) {
  return (
    <button
      type="button"
      className={
        "h-[23px] w-[72px] rounded-[3px] border font-['Noto_Sans_CJK_SC',sans-serif] text-xs leading-5 " +
        (primary
          ? "border-[#2f7fa8] bg-[linear-gradient(#eaf6fd_50%,#bfe3f7_51%,#cfeafa)] ring-1 ring-[#45c3ee] ring-inset"
          : "border-[#707070] bg-[linear-gradient(#f4f4f4_50%,#dcdcdc_51%,#d2d2d2)]")
      }
    >
      {label}
    </button>
  );
}

function PolygonDialog() {
  return (
    <section
      role="dialog"
      aria-label="多边形编辑器"
      className="absolute top-[109px] left-[781px] w-[769px] border border-[#6f6f6f] bg-white px-1.5 pb-1.5 shadow-[3px_3px_8px_2px_rgba(0,0,0,0.45)]"
    >
      <div className="flex h-7 items-center justify-between pl-0.5">
        <h2 className="text-[15px] leading-5">多边形编辑器</h2>
        <button type="button" aria-label="关闭" className="flex size-[21px] items-center justify-center rounded-sm border border-[#777] bg-white">
          <svg viewBox="0 0 13 13" className="size-[13px]">
            <path d="M1 1h4l1.500 2L8 1h4v3L9.500 6.500 12 9v3H8l-1.500-2L5 12H1V9l2.500-2.500L1 4z" fill="#fff" stroke="#444" />
          </svg>
        </button>
      </div>
      <div className="border border-[#4a4a4a] bg-[#f0f0f0] p-px">
        <div className="flex h-[30px] items-center gap-px border-b border-[#cfcfcf] pl-0.5">
          <Grip />
          <span className="w-[3px]" />
          <Tool icon="grid" label="定义网格" />
          <Sep />
          <Tool icon="line" label="画直线" dim />
          <Tool icon="arc" label="画弧" dim />
          <Tool icon="circle" label="画圆" dim />
          <Sep />
          <Tool icon="cross" label="清除多边形" />
          <Sep />
          <Tool icon="undo" label="回退" />
          <Sep />
          <Tool icon="importing" label="导入" />
          <Tool icon="exporting" label="导出" />
          <Sep />
          <Tool icon="search" label="查询多边形库" />
        </div>
        <div className="flex h-[31px] items-center border-b border-[#cfcfcf] pl-0.5 text-xs">
          <Grip />
          <fieldset className="ml-1 flex gap-2">
            {["不偏移", "正交", "极坐标"].map((t, i) => (
              <label key={t} className="flex items-center gap-2">
                <input
                  type="radio"
                  name="offset"
                  defaultChecked={i === 0}
                  className="size-[13px] appearance-none rounded-full border border-[#8e8f8f] bg-[radial-gradient(circle_at_60%_60%,#ffffff,#cfcfcf)] checked:bg-[radial-gradient(circle,#5cc4ee_0,#1b4a70_3px,#f0f0f0_4px)]"
                />
                {t}
              </label>
            ))}
          </fieldset>
          <span className="mr-1 ml-[11px] h-[23px] w-px bg-[#8a8a8a]" />
          <div className="flex gap-3.5 font-['Noto_Sans',sans-serif] text-[15px] text-[#222]">
            <OffsetField name="X" />
            <OffsetField name="Y" />
          </div>
        </div>
        <PolygonCanvas />
        <div className="flex h-[42px] items-center justify-end gap-[15px] border-b border-[#8a8a8a] pr-[13px]">
          <WinButton label="确定" primary />
          <WinButton label="取消" />
        </div>
        <div className="flex h-[21px] items-center bg-[#f1edec] font-['Liberation_Serif','Noto_Sans_CJK_SC',serif] text-xs">
          <span className="w-[150px] border-r border-[#dcdcdc] pl-px">坐标&nbsp; (X: &nbsp;0 &nbsp;Y: &nbsp;0)</span>
          <span className="w-[150px] border-r border-[#dcdcdc] pl-px">命令: &nbsp;画直线</span>
          <span className="grow">请选择下一点</span>
          <svg viewBox="0 0 12 12" className="mr-0.5 size-3 self-end" aria-hidden="true">
            <path d="M9 1h2v2H9zM5 5h2v2H5zM9 5h2v2H9zM1 9h2v2H1zM5 9h2v2H5zM9 9h2v2H9z" fill="#b4b4b4" />
          </svg>
        </div>
      </div>
    </section>
  );
}

function SpacingField({ label, text, active }: { label: string; text: string; active?: boolean }) {
  const id = active ? "spacing-h" : "spacing-v";
  return (
    <div className="rounded-[3px] border border-[#dcdcdc] px-1.5 pb-[5px]">
      <label htmlFor={id} className="-mt-2 block w-fit bg-[#f0f0f0] pr-1 text-xs leading-[17px] whitespace-nowrap">
        {label}
      </label>
      <div
        className={
          "h-[42px] rounded-[2px] border bg-white " +
          (active ? "border-[#b5cfe7] border-t-[#3d7bad]" : "border-[#e3e9ef] border-t-[#abadb3]")
        }
      >
        <textarea
          id={id}
          defaultValue={text}
          className={
            "mt-0.5 ml-px block h-3.5 resize-none overflow-hidden pl-px text-xs leading-3.5 whitespace-pre outline-none " +
            (active ? "w-11 bg-[#3399ff] text-white" : "w-[350px]")
          }
        />
      </div>
    </div>
  );
}

function GridDialog() {
  return (
    <section
      role="dialog"
      aria-label="定义网格"
      className="absolute top-[234px] left-[1382px] w-[426px] rounded-[6px] border border-[#2a2f38] bg-[linear-gradient(90deg,#5a5d60_0,#3a3d40_80px,#0c1014_152px,#bcdaf9_172px,#b4d6fa)] px-1.5 pb-1.5 shadow-[3px_4px_10px_3px_rgba(0,0,0,0.6)]"
    >
      <div className="flex h-[33px] justify-between overflow-hidden">
        <div className="flex items-center pl-px">
          <h2 className="bg-[#8c8e90] text-[15px] leading-5 shadow-[0_0_8px_7px_#8c8e90]">定义网格</h2>
        </div>
        <button
          type="button"
          aria-label="关闭"
          className="flex h-[25px] w-[59px] items-center justify-center rounded-b-[5px] border border-t-0 border-[#54201c] bg-[linear-gradient(#e5a196,#cf6a5a_48%,#b5301c_50%,#d4604c)]"
        >
          <svg viewBox="0 0 16 14" className="h-3.5 w-4">
            <path d="M1 1h4.500L8 4l2.500-3H15l-4.500 6L15 13h-4.500L8 10l-2.500 3H1l4.500-6z" fill="#fff" stroke="#5a4040" />
          </svg>
        </button>
      </div>
      <div className="h-[199px] border border-[#4c5866] bg-[#f0f0f0] px-3.5 pt-[22px] font-['Liberation_Serif','Noto_Sans_CJK_SC',serif]">
        <div className="flex flex-col gap-[15px]">
          <SpacingField active label="水平方向间距(mm)=>间距*个数, 间距, 间距*个数, 间距, . . ." text="400, 150" />
          <SpacingField label="垂直方向间距(mm)=>间距*个数, 间距, 间距*个数, 间距, . . ." text="150, 800" />
        </div>
        <div className="mt-[13px] flex justify-end gap-[15px]">
          <WinButton label="确定" />
          <WinButton label="取消" />
        </div>
      </div>
    </section>
  );
}

function ImeBar() {
  return (
    <div className="absolute top-[340px] right-0 flex h-[25px] w-[123px] items-center overflow-hidden rounded-l-[3px] border-2 border-r-0 border-[#a5c8ea] bg-[#f7fbff] pl-[7px] text-[#3f6f9f] shadow-sm">
      <svg viewBox="0 0 16 16" className="size-4 shrink-0">
        <rect x=".5" y=".5" width="15" height="15" fill="#dbe8f6" stroke="#3f6f9f" />
        <rect x="3.500" y="3.500" width="10" height="10" fill="#f7fbff" stroke="#3f6f9f" />
        <path d="M6.500 12V5.500h3q1.800 0 1.800 1.700T9.500 9h-3" fill="none" stroke="#2c5a92" strokeWidth="1.600" />
      </svg>
      <span className="ml-1.5 text-[13px] leading-4 font-bold">中</span>
      <svg viewBox="0 0 80 16" className="ml-1.5 h-4 w-20 shrink-0" fill="#3f78b4">
        <path d="M9 1c5 4 4 11-1 13-3 1-6 0-7-2 5 1 10-4 8-11z" />
        <circle cx="23" cy="8" r="1.700" fill="none" stroke="#3f78b4" />
        <path d="M28 7h3v3l-2 3h-1l1-3h-1z" />
        <rect x="39" y="4" width="15" height="9" rx="1.500" />
        <path d="M41 6.500h11M41 8.500h11M43 10.700h7" stroke="#fff" strokeDasharray="1 1" />
        <circle cx="68" cy="4.500" r="3" />
        <path d="M62 14c0-5 2-6 6-6s6 1 6 6z" />
      </svg>
    </div>
  );
}

export default function App() {
  return (
    <div className="relative flex h-screen flex-col overflow-hidden bg-white font-['Noto_Sans_CJK_SC',sans-serif] text-black">
      <MainToolbar />
      <div className="flex min-h-0 grow">
        <NavPane />
        <div className="flex min-w-0 grow flex-col border-l-4 border-[#f0f0f0]">
          <ComponentToolbar />
          <div className="flex min-h-0 grow">
            <ComponentTree />
            <PropertyPane />
          </div>
        </div>
      </div>

      <PolygonDialog />
      <GridDialog />
      <ImeBar />

      <span className="pointer-events-none absolute top-[30px] left-[157px] h-[55px] w-[63px] border-[6px] border-[#fe0000]" />
      <span className="pointer-events-none absolute top-[126px] left-[181px] h-[41px] w-[78px] border-[6px] border-[#fe0000]" />
      <span className="pointer-events-none absolute top-[144px] left-[513px] h-[36px] w-[170px] border-[6px] border-[#fe0000]" />
      <span className="pointer-events-none absolute top-[226px] left-[1382px] h-[51px] w-[89px] border-[7px] border-[#fe0000]" />
    </div>
  );
}
